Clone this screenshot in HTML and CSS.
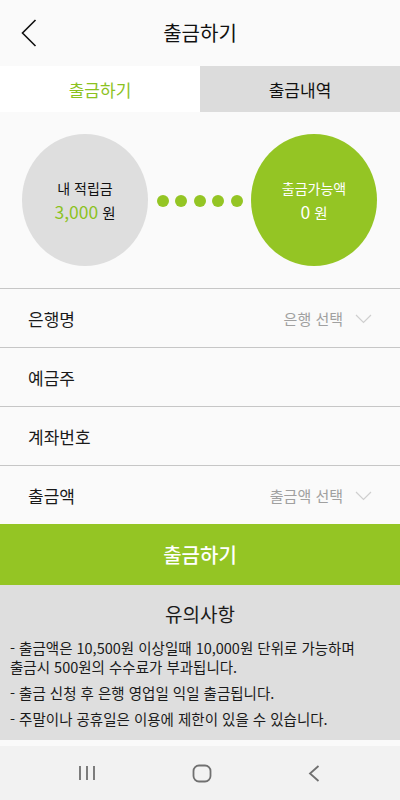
FILE: index.html
```html
<!DOCTYPE html>
<html lang="ko">
<head>
<meta charset="utf-8">
<title>출금하기</title>
<link rel="stylesheet" href="styles.css">
</head>
<body>
<div class="app">
  <header class="topbar">
    <svg class="back" width="16" height="28" viewBox="0 0 16 28"><polyline points="14.5,1 1.5,14 14.5,27" fill="none" stroke="#111" stroke-width="1.6"/></svg>
    <h1 class="title">출금하기</h1>
  </header>
  <nav class="tabs">
    <div class="tab active">출금하기</div>
    <div class="tab">출금내역</div>
  </nav>
  <section class="summary">
    <div class="circle grey">
      <div class="c-label">내 적립금</div>
      <div class="c-amount"><span class="num green">3,000</span> <span class="unit">원</span></div>
    </div>
    <div class="dots"><i></i><i></i><i></i><i></i><i></i></div>
    <div class="circle green-bg">
      <div class="c-label">출금가능액</div>
      <div class="c-amount"><span class="num">0</span> <span class="unit">원</span></div>
    </div>
  </section>
  <div class="form">
    <div class="row">
      <span class="label">은행명</span>
      <span class="select">은행 선택 <svg class="chev" width="17" height="10" viewBox="0 0 17 10"><polyline points="1,1 8.5,8.5 16,1" fill="none" stroke="#cfcfcf" stroke-width="1.2"/></svg></span>
    </div>
    <div class="row"><span class="label">예금주</span></div>
    <div class="row"><span class="label">계좌번호</span></div>
    <div class="row">
      <span class="label">출금액</span>
      <span class="select">출금액 선택 <svg class="chev" width="17" height="10" viewBox="0 0 17 10"><polyline points="1,1 8.5,8.5 16,1" fill="none" stroke="#cfcfcf" stroke-width="1.2"/></svg></span>
    </div>
  </div>
  <button class="submit">출금하기</button>
  <section class="notice">
    <h2 class="n-title">유의사항</h2>
    <p>- 출금액은 10,500원 이상일때 10,000원 단위로 가능하며<br>출금시 500원의 수수료가 부과됩니다.</p>
    <p>- 출금 신청 후 은행 영업일 익일 출금됩니다.</p>
    <p>- 주말이나 공휴일은 이용에 제한이 있을 수 있습니다.</p>
  </section>
  <div class="gap"></div>
  <footer class="navbar">
    <svg width="18" height="16" viewBox="0 0 18 16"><path d="M2 1v14M9 1v14M16 1v14" stroke="#707070" stroke-width="1.8" fill="none"/></svg>
    <svg width="20" height="19" viewBox="0 0 20 19"><rect x="1.5" y="1.5" width="17" height="16" rx="5.5" fill="none" stroke="#707070" stroke-width="1.8"/></svg>
    <svg width="12" height="17" viewBox="0 0 12 17"><polyline points="10.5,1 2,8.5 10.5,16" fill="none" stroke="#707070" stroke-width="1.8"/></svg>
  </footer>
</div>
</body>
</html>
```

FILE: styles.css
```css
* { box-sizing: border-box; }
html, body { margin: 0; padding: 0; }
body {
  font-family: "Noto Sans CJK KR", "Noto Sans", sans-serif;
  background: #fafafa;
  color: #1a1a1a;
}
.app { width: 400px; height: 800px; display: flex; flex-direction: column; overflow: hidden; }
.topbar {
  height: 66px;
  background: #fafafa;
  display: flex;
  align-items: center;
  justify-content: center;
  position: relative;
}
.back { position: absolute; left: 21px; top: 19px; }
.title { margin: 0; font-size: 20px; font-weight: 400; color: #111; line-height: 1; }
.tabs { display: flex; height: 46px; }
.tab {
  flex: 1;
  display: flex;
  align-items: center;
  justify-content: center;
  font-size: 17px;
  background: #dcdcdc;
  color: #111;
}
.tab.active { background: #fff; color: #8cc21f; }
.summary {
  height: 176px;
  padding: 22px 23px 22px 22px;
  display: flex;
  align-items: center;
  justify-content: space-between;
}
.circle {
  width: 126px;
  height: 132px;
  border-radius: 50%;
  display: flex;
  flex-direction: column;
  align-items: center;
  justify-content: center;
  line-height: 23px;
}
.circle.grey { background: #dedede; color: #111; }
.circle.green-bg { background: #94c524; color: #fff; }
.c-label { font-size: 14px; }
.c-amount { font-size: 14.5px; }
.num { font-size: 17.5px; }
.green { color: #8cc21f; }
.dots { display: flex; gap: 6.5px; margin-top: 2px; }
.dots i { display: block; width: 12px; height: 12px; border-radius: 50%; background: #94c524; }
.form { display: flex; flex-direction: column; }
.row {
  height: 59px;
  border-top: 1px solid #c6c6c6;
  padding: 0 28px 0 28px;
  display: flex;
  align-items: center;
  justify-content: space-between;
}
.label { font-size: 17px; color: #1a1a1a; }
.select { font-size: 15px; color: #a0a0a0; display: flex; align-items: center; }
.chev { margin-left: 12px; margin-top: 1px; }
.submit {
  height: 61px;
  border: 0;
  background: #94c524;
  color: #fff;
  font-family: inherit;
  font-size: 20px;
  font-weight: 500;
  padding: 0;
  margin: 0;
}
.notice {
  height: 155px;
  background: #dedede;
  padding: 17px 10px 0 10px;
  color: #1a1a1a;
}
.n-title { margin: 0 0 12px; font-size: 19px; font-weight: 400; text-align: center; line-height: 24px; }
.notice p { margin: 0 0 7px; font-size: 14.5px; line-height: 19px; }
.gap { height: 6px; background: #fafafa; }
.navbar {
  flex: 1;
  background: #f2f2f2;
  display: flex;
  align-items: center;
  justify-content: space-around;
  padding: 0 32px 0 30px;
}
```
